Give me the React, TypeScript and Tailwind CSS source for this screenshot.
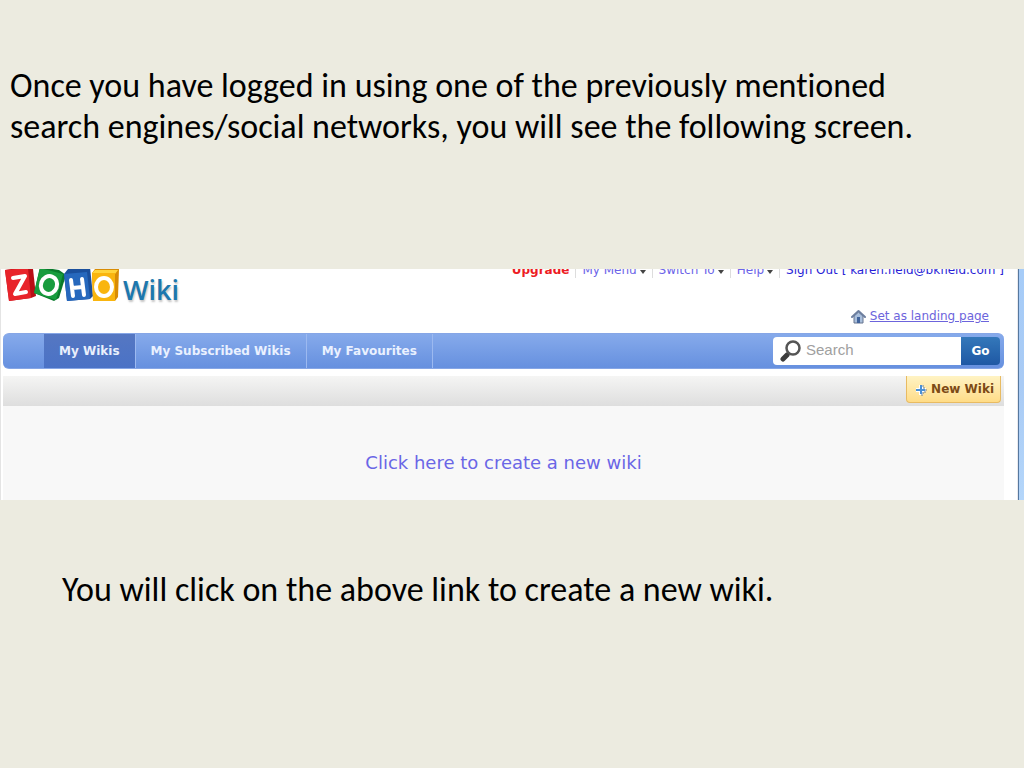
import { useState } from "react";

const menus = ["My Menu", "Switch To", "Help"];
const tabs = ["My Wikis", "My Subscribed Wikis", "My Favourites"];

function Logo() {
  return (
    <svg width="120" height="36" viewBox="3 0 120 36" className="block shrink-0" aria-label="Zoho" role="img">
      <path d="M5 1 L24 -2 L33 0 L36 27 L31 29 L9 32 Z" fill="#b80f16" />
      <path d="M5 1 L28 -1 L31 29 L9 32 Z" fill="#e8242b" />
      <path d="M13 9 L25 7 L15 25 L26 23" fill="none" stroke="#fff" strokeWidth="4" strokeLinejoin="round" strokeLinecap="round" />
      <path d="M40 -2 L59 1 L66 6 L59 29 L54 32 L34 24 Z" fill="#0b7a2c" />
      <path d="M40 -1 L63 5 L56 31 L34 24 Z" fill="#189c3e" />
      <ellipse cx="49" cy="16" rx="8" ry="9" fill="none" stroke="#fff" strokeWidth="4" transform="rotate(20 49 16)" />
      <path d="M64 5 L68 0 L90 -2 L93 27 L90 30 L67 32 Z" fill="#1a4f9c" />
      <path d="M64 5 L87 3 L90 30 L67 32 Z" fill="#2668bd" />
      <path d="M71 11 L73 27 M82 10 L84 26 M72 19 L83 18" fill="none" stroke="#fff" strokeWidth="4" strokeLinecap="round" />
      <path d="M92 4 L95 0 L119 0 L118 28 L115 32 L93 31 Z" fill="#d88c05" />
      <path d="M92 4 L95 1 L118 1 L115 5 Z" fill="#ffd43b" />
      <path d="M92 4 H115 V32 H93 Z" fill="#f9b50f" />
      <ellipse cx="104" cy="18" rx="8" ry="9" fill="none" stroke="#fff" strokeWidth="4" />
    </svg>
  );
}

function HomeIcon() {
  return (
    <svg width="15" height="15" viewBox="0 0 15 15" aria-hidden="true">
      <path d="M3 7 V14 H12 V7 L7.5 3 Z" fill="#a9bfdc" stroke="#66758f" />
      <path d="M1 8 L7.5 2 L14 8" fill="none" stroke="#6d7f9f" strokeWidth="2" strokeLinejoin="round" strokeLinecap="round" />
      <path d="M6 8 H9 V14 H6 Z" fill="#41649c" />
    </svg>
  );
}

function SearchIcon() {
  return (
    <svg width="22" height="22" viewBox="0 0 22 22" className="shrink-0" aria-hidden="true">
      <path d="M9 13 L7 15" stroke="#555" strokeWidth="2" />
      <path d="M7 15 L3 19" stroke="#3c3c3c" strokeWidth="5" strokeLinecap="round" />
      <circle cx="13" cy="8" r="6.5" fill="#fff" stroke="#555" strokeWidth="2.5" />
    </svg>
  );
}

function PlusIcon() {
  return (
    <svg width="12" height="12" viewBox="0 0 12 12" className="mt-0.5" aria-hidden="true">
      <path d="M4 1 H8 V4 H11 V8 H8 V11 H4 V8 H1 V4 H4 Z" fill="#fff" />
      <path d="M8 1 V4 H11 M11 5 V8 H8 V11 H5" fill="none" stroke="#6c7f91" strokeDasharray="2 1" />
      <path d="M6 1 V10 M1 6 H10" stroke="#4a90d6" strokeWidth="2" />
    </svg>
  );
}

function AccountLinks() {
  return (
    <ul className="-mt-[7px] flex h-4 items-center">
      <li className="pr-1.5">
        <a href="#upgrade" className="font-bold text-[#ed1c24]">Upgrade</a>
      </li>
      {menus.map(menu => (
        <li key={menu} className="flex items-center gap-[3px] border-l border-[#dddddd] px-1.5">
          <a href="#menu" className="text-[#6c64e8]">{menu}</a>
          <svg width="6" height="4" viewBox="0 0 6 4" className="mt-1" aria-hidden="true">
            <path d="M0 0 H6 L3 4 Z" fill="#444" />
          </svg>
        </li>
      ))}
      <li className="border-l border-[#dddddd] pl-1.5">
        <a href="#signout" className="text-[#2a1fd6]">Sign Out [ karen.field@bkfield.com ]</a>
      </li>
    </ul>
  );
}

function WikiScreen() {
  const [active, setActive] = useState("My Wikis");
  const [query, setQuery] = useState("");

  return (
    <section className="flex overflow-hidden bg-white font-['DejaVu_Sans',sans-serif] text-xs">
      <div className="min-w-0 flex-1 border-l border-[#e4e4e4] pl-0.5">
        <header className="flex h-16 justify-between">
          <div className="flex items-start">
            <Logo />
            <span className="mt-[5px] font-['Open_Sans',sans-serif] text-[27px] leading-8 font-semibold text-[#1c77ae] [text-shadow:1px_2px_2px_#c4c4c4]">Wiki</span>
          </div>
          <div className="flex flex-col items-end justify-between pb-[7px]">
            <AccountLinks />
            <div className="mr-[15px] flex items-center gap-1 leading-5">
              <HomeIcon />
              <a href="#landing" className="text-[#6c64dc] underline">Set as landing page</a>
            </div>
          </div>
        </header>

        <nav className="flex h-9 items-stretch justify-between rounded-md border-y border-[#86a6e6] bg-linear-to-b from-[#86aaeb] to-[#6690df] pl-[41px]">
          <div className="flex">
            {tabs.map(tab => (
              <button
                key={tab}
                onClick={() => setActive(tab)}
                className={`border-r border-[#9cb9f0] px-[15px] font-bold ${
                  active === tab ? "bg-linear-to-b from-[#5577c2] to-[#4a72c6] text-[#e9effc]" : "text-[#eaf1ff]"
                }`}
              >
                {tab}
              </button>
            ))}
          </div>
          <form className="my-[3px] mr-1 flex" onSubmit={e => e.preventDefault()}>
            <label className="flex w-[188px] items-center gap-1 rounded-l-sm bg-white pl-[7px]">
              <SearchIcon />
              <input
                type="text"
                aria-label="Search"
                placeholder="Search"
                value={query}
                onChange={e => setQuery(e.target.value)}
                className="w-full min-w-0 pb-0.5 font-['Liberation_Sans',sans-serif] text-[15px] leading-5 text-gray-700 outline-none placeholder:text-[#a0a0a0]"
              />
            </label>
            <button type="submit" className="w-[39px] rounded-r-sm bg-linear-to-b from-[#3478ba] to-[#1f58a4] font-bold text-white">
              Go
            </button>
          </form>
        </nav>

        <div className="mt-[7px] flex h-[30px] items-start justify-end bg-linear-to-b from-[#f5f5f4] to-[#dedede] pr-[3px]">
          <button className="flex h-[27px] items-center gap-1 rounded-b-sm border border-t-0 border-[#e8bb62] bg-linear-to-b from-[#fff3c4] to-[#ffdc87] pr-1.5 pl-2 font-bold text-[#7c4a16]">
            <PlusIcon />
            New Wiki
          </button>
        </div>

        <main className="bg-[#f8f8f8] pt-[45px] pb-[25px] text-center text-lg leading-6">
          <a href="#create" className="text-[#6a66e6]">Click here to create a new wiki</a>
        </main>
      </div>
      <div className="w-3.5 border-r border-[#e9e9ee]" />
      <div className="w-1.5 border-l border-[#56789f] bg-linear-to-b from-[#a6ccf8] via-[#a9cbf5] to-[#b4d6fa]" />
    </section>
  );
}

export default function App() {
  return (
    <div className="min-h-screen bg-[#ecebe0] font-[Carlito,Lato,sans-serif] text-[34px] leading-[41px] text-black [font-variant-ligatures:none]">
      <p className="px-2.5 pt-[65px] pb-[122px]">
        Once you have logged in using one of the previously mentioned <br />
        search engines/social networks, you will see the following screen.
      </p>
      <WikiScreen />
      <p className="px-[62px] pt-[69px]">You will click on the above link to create a new wiki.</p>
    </div>
  );
}
